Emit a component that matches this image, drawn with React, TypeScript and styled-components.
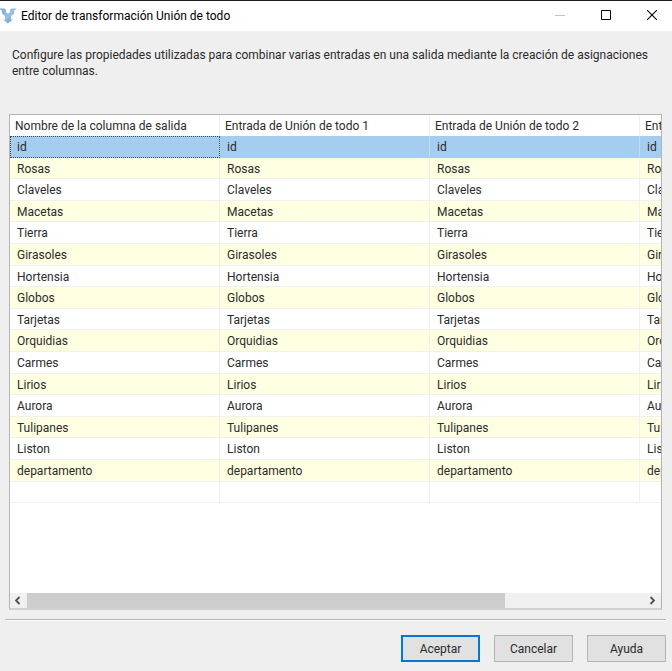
import React from "react";
import styled, { createGlobalStyle, css } from "styled-components";

const GlobalStyle = createGlobalStyle`
  * { box-sizing: border-box; }
  body {
    margin: 0;
    background: #efefef;
    color: #2b2b2b;
    font: 12px/16px Roboto, "Segoe UI", sans-serif;
  }
`;

const Dialog = styled.main`
  display: flex;
  flex-direction: column;
  min-height: 100vh;
  border-top: 1px solid #1f1f24;
  background: #efefef;
`;

const TitleBar = styled.header`
  display: flex;
  align-items: center;
  height: 30px;
  background: #fff;
  color: #000;
`;

const Title = styled.h1`
  flex: 1;
  margin: 0 0 0 5px;
  font-size: 12px;
  font-weight: 400;
  line-height: 16px;
  white-space: nowrap;
`;

const WindowButton = styled.button`
  display: flex;
  align-items: center;
  justify-content: center;
  width: 46px;
  height: 30px;
  padding: 0 0 2px;
  border: 0;
  background: none;
  color: #000;

  &:disabled { color: #c4c4c4; }
`;

const WindowButtons = styled.div`
  display: flex;
  margin-right: -3px;
  overflow: hidden;
`;

const Content = styled.section`
  display: flex;
  flex: 1;
  flex-direction: column;
  padding: 16px 10px 9px 9px;
`;

const Description = styled.p`
  margin: 0 0 35px;
  padding: 0 3px;
`;

const GridFrame = styled.div`
  display: flex;
  flex: 1;
  flex-direction: column;
  border: 1px solid #b4b4b8;
  border-bottom: 2px solid #d2d2d2;
  background: #fff;
`;

const GridViewport = styled.div`
  flex: 1;
  overflow: hidden;
`;

const Table = styled.table`
  width: 840px;
  table-layout: fixed;
  border-collapse: separate;
  border-spacing: 0;
`;

const HeaderCell = styled.th`
  height: 21px;
  padding: 1px 5px 0;
  border-right: 1px solid #efefef;
  font-weight: 400;
  text-align: left;
  white-space: nowrap;
`;

const Cell = styled.td`
  height: 22px;
  padding: 1px 7px 0;
  border-right: 1px solid #f0f0ee;
  border-bottom: 1px solid #f0f0ee;
  white-space: nowrap;
`;

const Row = styled.tr<{ $selected: boolean }>`
  &:nth-child(even) { background: #ffffe1; }
  &:nth-child(5n + 2) ${Cell}, &:nth-child(5n + 4) ${Cell} { height: 21px; }

  ${({ $selected }) =>
    $selected &&
    css`
      background: #a5cdf0;
      ${Cell} { border-right-color: #c4dcf2; border-bottom-color: #a5cdf0; }
      ${Cell}:first-child { outline: 1px dotted #3f4a58; outline-offset: -1px; }
    `}
`;

const ScrollBar = styled.div`
  display: flex;
  height: 15px;
  background: #f0f0f0;
`;

const ScrollButton = styled.button`
  display: flex;
  align-items: center;
  justify-content: center;
  width: 17px;
  padding: 0;
  border: 0;
  background: #f0f0f0;
  color: #505050;
`;

const ScrollTrack = styled.div`
  flex: 1;
`;

const ScrollThumb = styled.div`
  width: 77.5%;
  height: 100%;
  background: #cdcdcd;
`;

const Footer = styled.footer`
  display: flex;
  justify-content: flex-end;
  gap: 14px;
  margin: 0 6px 0 5px;
  padding: 15px 0 9px;
  border-top: 1px solid #b4b4b4;
  box-shadow: inset 0 1px #fafafa;
`;

const ActionButton = styled.button<{ $primary?: boolean }>`
  width: 79px;
  height: 27px;
  padding: 0;
  border: ${({ $primary }) => ($primary ? "2px solid #0078d7" : "1px solid #b4b4b4")};
  background: #e1e1e1;
  color: #2b2b2b;
  font: inherit;
`;

const columns = ["Nombre de la columna de salida", "Entrada de Unión de todo 1", "Entrada de Unión de todo 2", "Entrada de Unión de todo 3"];

const names = [
  "id", "Rosas", "Claveles", "Macetas", "Tierra", "Girasoles", "Hortensia", "Globos", "Tarjetas",
  "Orquidias", "Carmes", "Lirios", "Aurora", "Tulipanes", "Liston", "departamento", "",
];

function MergeIcon() {
  return (
    <svg width="16" height="16" viewBox="0 0 16 16" aria-hidden="true">
      <defs>
        <linearGradient id="merge" x1="0" y1="0" x2="1" y2="1">
          <stop offset="0" stopColor="#7fa6c8" />
          <stop offset="0.5" stopColor="#98c1e4" />
          <stop offset="1" stopColor="#5a94ca" />
        </linearGradient>
      </defs>
      <path
        d="M0 .5h4.500L6 2v2.500l2 1 2-1V2L11.500.500H16v1L14 2.500v3L11 8v3.500h2L7.800 15.500 3 11.500h2V8L2 5.500v-3L0 1.500z"
        fill="url(#merge)"
      />
    </svg>
  );
}

function Chevron({ right = false }: { right?: boolean }) {
  return (
    <svg width="7" height="9" viewBox="0 0 7 9" aria-hidden="true">
      <path d={right ? "M1.500 1L5 4.500L1.500 8" : "M4.500 1L1 4.500L4.500 8"} fill="none" stroke="currentColor" strokeWidth="1.800" />
    </svg>
  );
}

export default function App() {
  return (
    <>
      <GlobalStyle />
      <Dialog>
        <TitleBar>
          <MergeIcon />
          <Title>Editor de transformación Unión de todo</Title>
          <WindowButtons>
            <WindowButton aria-label="Minimizar" disabled>
              <svg width="10" height="10"><path d="M0 5.500h10" stroke="currentColor" /></svg>
            </WindowButton>
            <WindowButton aria-label="Maximizar">
              <svg width="10" height="10"><path d="M.5.5h9v9h-9z" fill="none" stroke="currentColor" /></svg>
            </WindowButton>
            <WindowButton aria-label="Cerrar">
              <svg width="10" height="10"><path d="M0 0l10 10M10 0L0 10" stroke="currentColor" strokeWidth="1.100" /></svg>
            </WindowButton>
          </WindowButtons>
        </TitleBar>
        <Content>
          <Description>
            Configure las propiedades utilizadas para combinar varias entradas en una salida mediante la creación de asignaciones entre columnas.
          </Description>
          <GridFrame>
            <GridViewport>
              <Table>
                <thead>
                  <tr>
                    {columns.map((column) => (
                      <HeaderCell key={column} scope="col">{column}</HeaderCell>
                    ))}
                  </tr>
                </thead>
                <tbody>
                  {names.map((name, index) => (
                    <Row key={name} $selected={index === 0}>
                      {columns.map((column) => (
                        <Cell key={column}>{name}</Cell>
                      ))}
                    </Row>
                  ))}
                </tbody>
              </Table>
            </GridViewport>
            <ScrollBar>
              <ScrollButton aria-label="Desplazar a la izquierda"><Chevron /></ScrollButton>
              <ScrollTrack><ScrollThumb /></ScrollTrack>
              <ScrollButton aria-label="Desplazar a la derecha"><Chevron right /></ScrollButton>
            </ScrollBar>
          </GridFrame>
        </Content>
        <Footer>
          <ActionButton $primary>Aceptar</ActionButton>
          <ActionButton>Cancelar</ActionButton>
          <ActionButton>Ayuda</ActionButton>
        </Footer>
      </Dialog>
    </>
  );
}
